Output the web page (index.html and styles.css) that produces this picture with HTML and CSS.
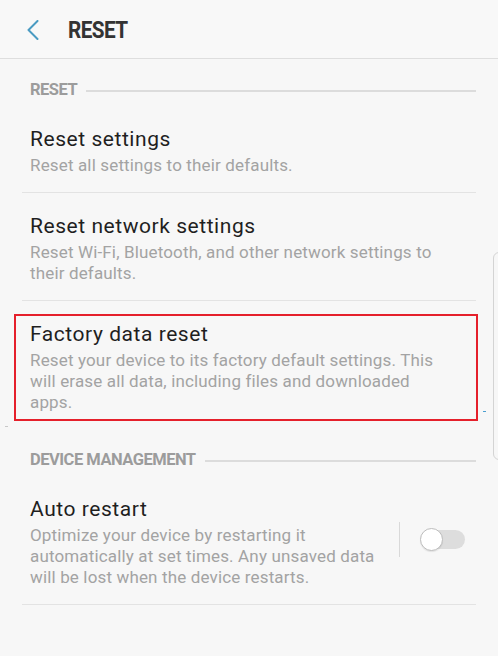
FILE: index.html
```html
<!DOCTYPE html>
<html lang="en">
<head>
<meta charset="utf-8">
<title>Reset</title>
<link rel="stylesheet" href="styles.css">
</head>
<body>
<div class="screen">
  <header class="appbar">
    <svg class="back" width="12" height="20" viewBox="0 0 12 20" aria-hidden="true">
      <path d="M10.5 1 L1.5 10 L10.5 19" fill="none" stroke="#4a9bc2" stroke-width="2" stroke-linecap="round" stroke-linejoin="round"/>
    </svg>
    <h1 class="appbar-title">RESET</h1>
  </header>

  <main class="content">
    <div class="section-label"><span>RESET</span><i class="rule"></i></div>

    <div class="row divided">
      <div class="row-text">
        <div class="title">Reset settings</div>
        <div class="sub">Reset all settings to their defaults.</div>
      </div>
    </div>

    <div class="row divided">
      <div class="row-text">
        <div class="title">Reset network settings</div>
        <div class="sub">Reset Wi-Fi, Bluetooth, and other network settings to their defaults.</div>
      </div>
    </div>

    <div class="row highlighted">
      <div class="row-text">
        <div class="title">Factory data reset</div>
        <div class="sub">Reset your device to its factory default settings. This will erase all data, including files and downloaded apps.</div>
      </div>
      <span class="highlight-box"></span>
    </div>

    <div class="section-label"><span>DEVICE MANAGEMENT</span><i class="rule"></i></div>

    <div class="row divided switch-row">
      <div class="row-text narrow">
        <div class="title">Auto restart</div>
        <div class="sub">Optimize your device by restarting it automatically at set times. Any unsaved data will be lost when the device restarts.</div>
      </div>
      <div class="switch-area">
        <i class="vdivider"></i>
        <span class="switch"><span class="knob"></span></span>
      </div>
    </div>
  </main>

  <span class="scroll-thumb"></span>
  <span class="tick tick-blue"></span>
  <span class="tick tick-grey"></span>
</div>
</body>
</html>
```

FILE: styles.css
```css
* { box-sizing: border-box; }

html, body {
  margin: 0;
  padding: 0;
  background: #f7f7f7;
}

body {
  font-family: Roboto, "Noto Sans", "Liberation Sans", sans-serif;
  color: #1f1f1f;
}

.screen {
  position: relative;
  width: 498px;
  height: 656px;
  overflow: hidden;
  background: #f7f7f7;
}

.appbar {
  height: 59px;
  display: flex;
  align-items: center;
  padding-left: 27px;
  border-bottom: 1px solid #dedede;
  background: #f8f8f8;
}

.back {
  display: block;
  margin-top: 1px;
}

.appbar-title {
  margin: 4px 0 0 29px;
  font-size: 23px;
  font-weight: 700;
  letter-spacing: -0.6px;
  color: #333333;
  line-height: 26px;
  transform: scaleX(0.9);
  transform-origin: left center;
}

.content {
  padding: 0 22px;
}

.section-label {
  display: flex;
  align-items: center;
  gap: 9px;
  padding: 21px 0 6px 8px;
  font-size: 16.5px;
  line-height: 20px;
  font-weight: 700;
  letter-spacing: -0.5px;
  color: #9c9c9c;
}

.section-label .rule {
  flex: 1;
  height: 2px;
  background: #dcdcdc;
  margin-top: 1px;
}

.row {
  position: relative;
  display: flex;
  align-items: center;
  padding: 20px 0 16px 8px;
}

.row.divided {
  border-bottom: 1px solid #e3e3e3;
}

.row-text {
  flex: 1;
  padding-right: 26px;
}

.row-text.narrow {
  padding-right: 0;
}

.title {
  font-size: 21px;
  line-height: 26px;
  letter-spacing: 0.55px;
  color: #1f1f1f;
}

.sub {
  margin-top: 3px;
  font-size: 17px;
  line-height: 21px;
  letter-spacing: 0.15px;
  color: #a3a3a3;
}

.highlight-box {
  position: absolute;
  left: -8px;
  right: -2px;
  top: 12.5px;
  bottom: 8px;
  border: 2px solid #e5202b;
}

.switch-area {
  display: flex;
  align-items: center;
  padding: 0 11px 0 12px;
  margin-top: -6px;
}

.vdivider {
  width: 1px;
  height: 35px;
  background: #d9d9d9;
  margin-right: 20px;
}

.switch {
  position: relative;
  display: block;
  width: 45px;
  height: 23px;
}

.switch::before {
  content: "";
  position: absolute;
  left: 8px;
  right: 0;
  top: 2px;
  height: 19px;
  border-radius: 10px;
  background: #dddddd;
}

.knob {
  position: absolute;
  left: 0;
  top: 0;
  width: 23px;
  height: 23px;
  border-radius: 50%;
  background: #ffffff;
  border: 1px solid #bdbdbd;
  box-shadow: 0 1px 1px rgba(0, 0, 0, 0.08);
}

.scroll-thumb {
  position: absolute;
  left: 493px;
  top: 252px;
  width: 14px;
  height: 208px;
  border: 1px solid #d4d4d4;
  border-radius: 6px;
}

.tick {
  position: absolute;
  height: 1px;
}

.tick-blue {
  left: 483px;
  top: 411px;
  width: 3px;
  background: #4a9fd0;
}

.tick-grey {
  left: 5px;
  top: 426px;
  width: 3px;
  background: #c8c8c8;
}
```
